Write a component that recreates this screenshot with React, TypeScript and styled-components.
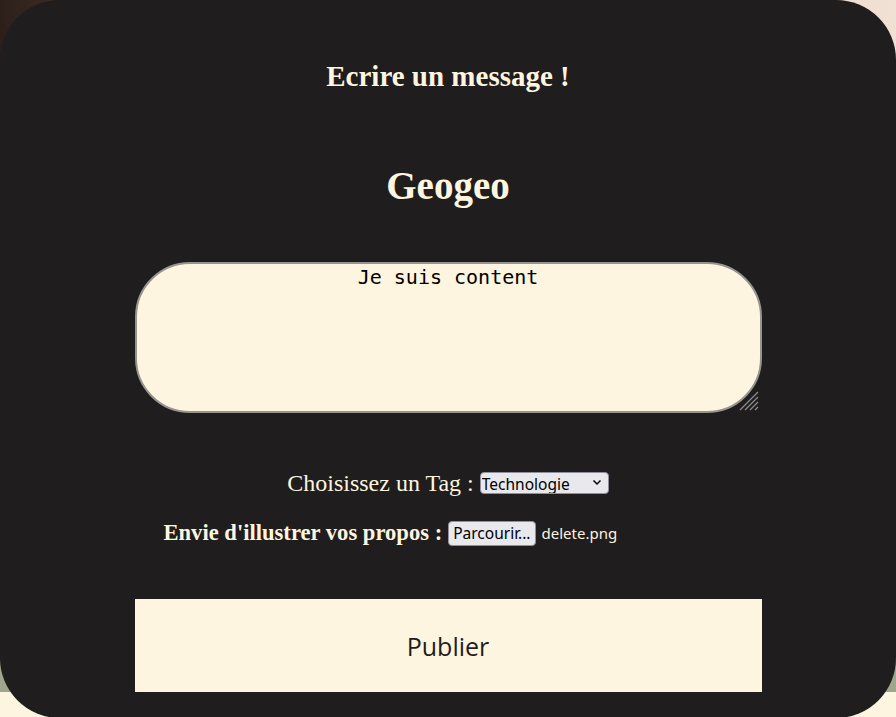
import React from "react";
import styled, { createGlobalStyle } from "styled-components";

const GlobalStyle = createGlobalStyle`
  html, body {
    margin: 0;
    padding: 0;
    overflow: hidden;
  }
  body {
    height: 717px;
    background:
      linear-gradient(to bottom, transparent 0 660px, #9ea68c 660px 692px, #fdf5df 692px),
      linear-gradient(to right, #2c1f1a 0%, #6e4f3e 25%, #c9ae9a 55%, #ecd9ca 80%, #f1e0d4 100%);
  }
`;

const Card = styled.main`
  box-sizing: border-box;
  width: 896px;
  height: 718px;
  background: #1f1d1e;
  border-radius: 60px;
  display: flex;
  flex-direction: column;
  align-items: center;
  padding-top: 60px;
  color: #fdf5df;
`;

const Title = styled.h2`
  margin: 0;
  font-family: "Liberation Serif", "Times New Roman", serif;
  font-weight: bold;
  font-size: 29px;
  line-height: 32px;
`;

const UserName = styled.h1`
  margin: 71px 0 0;
  font-family: "Liberation Serif", "Times New Roman", serif;
  font-weight: bold;
  font-size: 39px;
  line-height: 46px;
`;

const AreaWrap = styled.div`
  position: relative;
  margin-top: 53px;
  display: flex;
`;

const MessageArea = styled.textarea`
  box-sizing: border-box;
  width: 627px;
  height: 151px;
  background: #fdf5df;
  border: 2px solid #97948f;
  border-radius: 55px;
  padding: 2px 2px 2px;
  font-family: "DejaVu Sans Mono", "Liberation Mono", monospace;
  font-size: 20px;
  line-height: 23px;
  text-align: center;
  color: #000;
  outline: none;
  resize: none;
`;

const Grip = styled.svg`
  position: absolute;
  right: 3px;
  bottom: 2px;
  pointer-events: none;
`;

const Row = styled.div<{ $mt: number }>`
  margin-top: ${(p) => p.$mt}px;
  display: flex;
  align-items: center;
  gap: 6px;
  height: 28px;
`;

const TagLabel = styled.label`
  font-family: "Liberation Serif", "Times New Roman", serif;
  font-size: 24px;
  line-height: 28px;
`;

const FileLabel = styled.label`
  font-family: "Liberation Serif", "Times New Roman", serif;
  font-weight: bold;
  font-size: 22.6px;
  line-height: 28px;
`;

const SelectWrap = styled.div`
  position: relative;
  display: flex;
`;

const Select = styled.select`
  appearance: none;
  box-sizing: border-box;
  width: 129px;
  height: 22px;
  padding: 0 0 0 1px;
  background: #e9e9ed;
  border: 1px solid #8f8f9d;
  border-radius: 4px;
  font-family: "Noto Sans", "Open Sans", sans-serif;
  font-size: 15.5px;
  color: #000;
  outline: none;
`;

const Chevron = styled.svg`
  position: absolute;
  right: 7px;
  top: 7px;
  pointer-events: none;
`;

const BrowseButton = styled.button`
  box-sizing: border-box;
  height: 25px;
  padding: 0 4px;
  background: #e9e9ed;
  border: 1px solid #8f8f9d;
  border-radius: 4px;
  font-family: "Noto Sans", "Open Sans", sans-serif;
  font-size: 15.5px;
  color: #000;
`;

const FileName = styled.span`
  width: 191px;
  font-family: "Noto Sans", "Open Sans", sans-serif;
  font-size: 15px;
  color: #fdf5df;
`;

const Publish = styled.button`
  margin-top: 52px;
  width: 627px;
  height: 93px;
  border: none;
  background: #fdf5df;
  color: #1f1d1e;
  font-family: "Open Sans", "Noto Sans", sans-serif;
  font-size: 25px;
`;

export default function App() {
  return (
    <>
      <GlobalStyle />
      <Card>
        <Title>Ecrire un message !</Title>
        <UserName>Geogeo</UserName>
        <AreaWrap>
          <MessageArea defaultValue="Je suis content" />
          <Grip width="22" height="22" viewBox="0 0 22 22">
            <path
              d="M21 3 L3 21 M21 8 L8 21 M21 13 L13 21 M21 18 L18 21"
              stroke="#8a8a8a"
              strokeWidth="1.3"
              fill="none"
            />
          </Grip>
        </AreaWrap>
        <Row $mt={56}>
          <TagLabel>Choisissez un Tag :</TagLabel>
          <SelectWrap>
            <Select defaultValue="tech">
              <option value="tech">Technologie</option>
            </Select>
            <Chevron width="10" height="7" viewBox="0 0 10 7">
              <path d="M1.5 1.5 L5 5 L8.5 1.5" fill="none" stroke="#000" strokeWidth="1.5" />
            </Chevron>
          </SelectWrap>
        </Row>
        <Row $mt={22}>
          <FileLabel>Envie d'illustrer vos propos :</FileLabel>
          <BrowseButton type="button">Parcourir...</BrowseButton>
          <FileName>delete.png</FileName>
        </Row>
        <Publish type="button">Publier</Publish>
      </Card>
    </>
  );
}
